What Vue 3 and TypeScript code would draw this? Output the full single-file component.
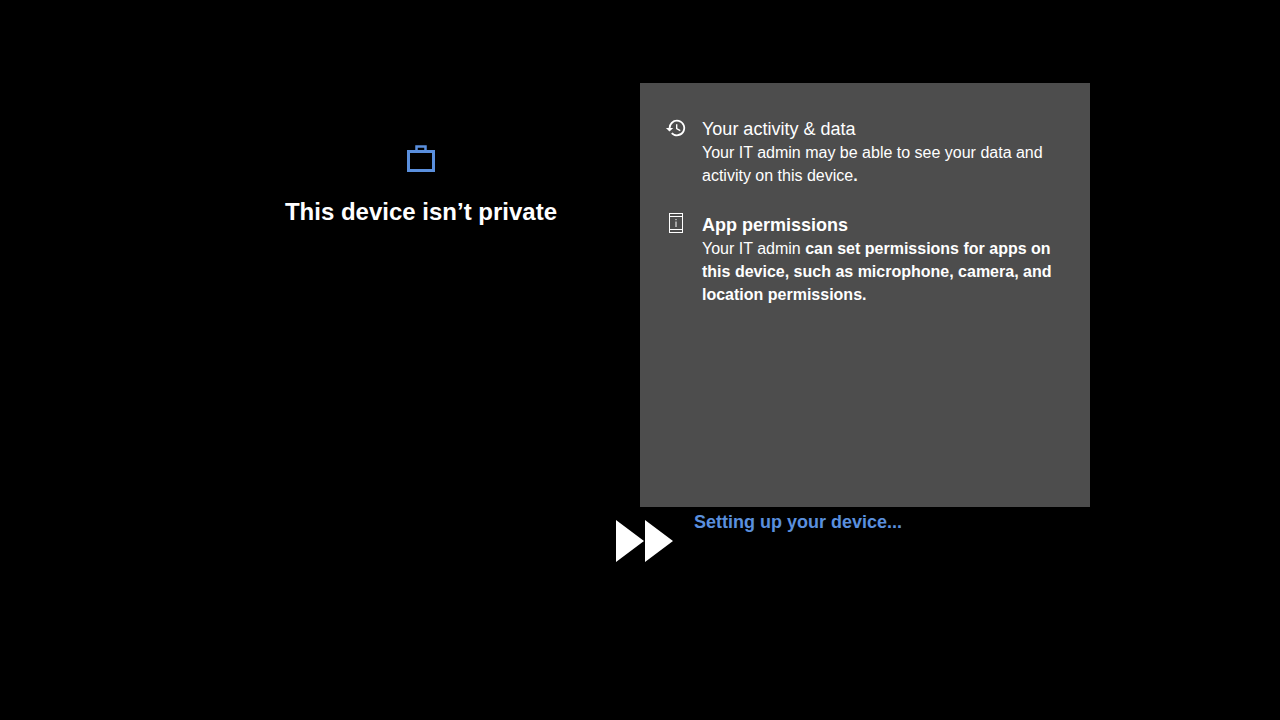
<script setup lang="ts">
</script>

<template>
  <div class="page">
    <div class="main">
      <section class="intro">
        <svg class="case" width="30" height="30" viewBox="0 0 30 30" fill="none" stroke="#5a8fdd" stroke-width="3">
          <rect x="2.5" y="8.5" width="25" height="19" />
          <rect x="10.5" y="3.5" width="9" height="5" stroke-width="2.5" />
        </svg>
        <h1>This device isn’t private</h1>
      </section>
      <section class="panel">
        <div class="item">
          <svg class="ico" width="22" height="22" viewBox="0 0 24 24" fill="#fff">
            <path d="M13 3a9 9 0 0 0-9 9H1l3.9 3.9L9 12H6a7 7 0 1 1 2.05 4.95l-1.42 1.42A9 9 0 1 0 13 3zm-1 5v5l4.25 2.52.77-1.28-3.52-2.09V8H12z" />
          </svg>
          <div class="copy">
            <h2 class="light">Your activity &amp; data</h2>
            <p>Your IT admin may be able to see your data and activity on this device<b>.</b></p>
          </div>
        </div>
        <div class="item">
          <svg class="ico phone" width="22" height="22" viewBox="0 0 22 22" fill="none" stroke="#fff" stroke-width="1">
            <rect x="4.5" y="1.5" width="13" height="19" />
            <path d="M4.5 4.5h13M4.5 17.5h13M11 9.5v5.500M11 7v1.200" />
          </svg>
          <div class="copy">
            <h2>App permissions</h2>
            <p>Your IT admin <b>can set permissions for apps on this device, such as microphone, camera, and location permissions.</b></p>
          </div>
        </div>
      </section>
    </div>
    <div class="status">
      <svg class="arrows" width="58" height="44" viewBox="0 0 58 44" fill="#fff">
        <path d="M0 1l28 21L0 43zM29 1l28 21L29 43z" />
      </svg>
      <span class="label">Setting up your device...</span>
    </div>
  </div>
</template>

<style scoped>
.page {
  width: 1280px;
  height: 720px;
  box-sizing: border-box;
  padding-top: 83px;
  background: #000;
  color: #fff;
  font-family: "Liberation Sans", Arial, sans-serif;
  overflow: hidden;
}
.main {
  display: flex;
  padding-left: 202px;
}
.intro {
  width: 438px;
  display: flex;
  flex-direction: column;
  align-items: center;
  padding-top: 60px;
}
.case {
  display: block;
}
h1 {
  margin: 23px 0 0;
  font-size: 24px;
  line-height: 32px;
  font-weight: 700;
}
.panel {
  width: 450px;
  height: 424px;
  box-sizing: border-box;
  padding: 34px 14px 0 25px;
  background: #4d4d4d;
  display: flex;
  flex-direction: column;
  gap: 26px;
}
.item {
  display: flex;
  gap: 15px;
}
.ico {
  flex: none;
  width: 22px;
  height: 22px;
  margin-top: 0;
}
.phone {
  margin-top: -1px;
}
.copy {
  flex: 1;
  min-width: 0;
}
h2 {
  margin: 0;
  font-size: 18px;
  line-height: 24px;
  font-weight: 700;
}
h2.light {
  font-weight: 400;
}
p {
  margin: 0;
  font-size: 16px;
  line-height: 23px;
}
.status {
  display: flex;
  align-items: flex-start;
  padding-left: 616px;
}
.arrows {
  flex: none;
  margin-top: 12px;
}
.label {
  margin-left: 20px;
  margin-top: 4px;
  font-size: 18px;
  line-height: 22px;
  font-weight: 700;
  color: #5a8fdd;
}
</style>
